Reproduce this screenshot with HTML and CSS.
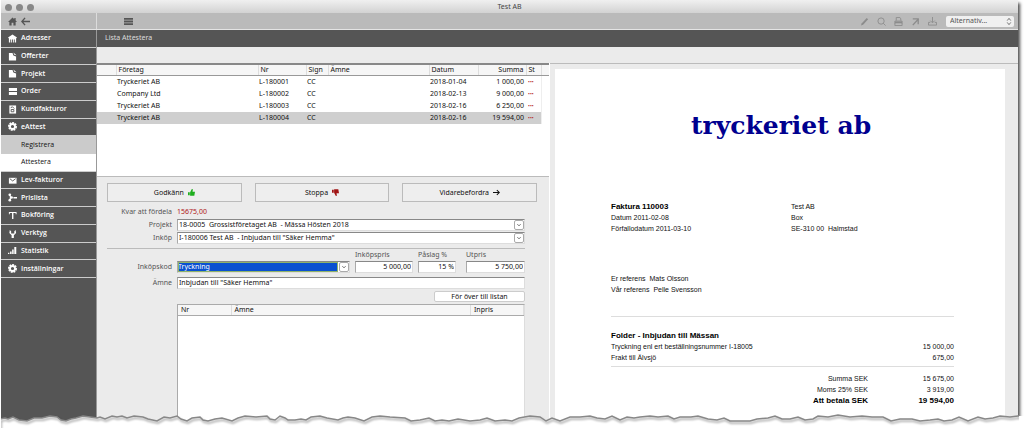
FILE: index.html
```
<!DOCTYPE html>
<html lang="sv">
<head>
    <meta charset="UTF-8">
    <meta name="viewport" content="width=device-width, initial-scale=1.0">
    <title>Test AB</title>
    <link rel="stylesheet" href="styles.css">
</head>
<body>
    <div class="window">
        <header class="titlebar">
            <span class="dots"><i></i><i></i><i></i></span>
            <h1>Test AB</h1>
        </header>

        <!-- Toolbar -->
        <div class="toolbar">
            <div class="toolbar-nav">
                <button type="button" aria-label="Hem"><svg viewBox="0 0 10 10"><path d="M5 0.5 0 5.5h1.5V9.5H4V6.500h2v3h2.500V5.500H10L8.500 4V1H7v1.500z"/></svg></button>
                <button type="button" aria-label="Tillbaka"><svg viewBox="0 0 10 10"><path d="M4.500 1 1 5l3.500 4M1 5h9" class="line"/></svg></button>
            </div>
            <button type="button" class="menu" aria-label="Meny"><svg viewBox="0 0 10 10"><path d="M0 1h10v2H0zM0 4h10v2H0zM0 7h10v2H0z"/></svg></button>
            <div class="toolbar-tools">
                <button type="button" aria-label="Redigera"><svg viewBox="0 0 10 10"><path d="M1 9.500 2 7l5.500-6L9 2.500 3.500 8.500z"/></svg></button>
                <button type="button" aria-label="Sök"><svg viewBox="0 0 10 10"><circle cx="4.500" cy="4.500" r="3.500" class="thin"/><path d="M7 7l2.500 2.500" class="thin"/></svg></button>
                <button type="button" aria-label="Skriv ut"><svg viewBox="0 0 10 10"><path d="M2.500 4V0.500h4L7.500 2v2M1 7.500V4.500h8v3M1 7v2.500h8V7" class="thin"/><path d="M1 5h8v2H1z"/></svg></button>
                <button type="button" aria-label="Öppna"><svg viewBox="0 0 10 10"><path d="M2 2h6v6M8.500 2 2 9" class="line"/></svg></button>
                <button type="button" aria-label="Hämta"><svg viewBox="0 0 10 10"><path d="M5 0v6M2.500 4 5 6.500 7.500 4M2.500 6H0.500v3h9V6h-2" class="thin"/></svg></button>
            </div>
            <div class="alt">
                <select aria-label="Alternativ"><option>Alternativ...</option></select>
                <svg viewBox="0 0 6 10"><path d="M1 4l2-2.500L5 4M1 6l2 2.500L5 6"/></svg>
            </div>
        </div>

        <div class="content">
            <nav class="sidebar">
                <div class="sidebar-items">
                    <a href="#"><svg viewBox="0 0 10 10"><path d="M5 0.500 0 4l1 1v4.500h1.500V6h1v3.500h1V6h1v3.500h1V6h1v3.500H9V5l1-1z"/></svg>Adresser</a>
                    <a href="#"><svg viewBox="0 0 10 10"><path d="M1 1h4l1 3 3 1v4.500H1zM6 0.500l3.500 3L7 3z"/></svg>Offerter</a>
                    <a href="#"><svg viewBox="0 0 10 10"><path d="M1 1h4l1 3 3 1v4.500H1zM6 0.500l3.500 3L7 3z"/></svg>Projekt</a>
                    <a href="#"><svg viewBox="0 0 10 10"><path d="M1 1h9v3.500H1zM1 5.500h9V9H1z"/></svg>Order</a>
                    <a href="#"><svg viewBox="0 0 10 10"><path d="M1.500 0.500h7.500v9H1.500z"/><path d="M3 3l2-1 2 2M3.500 5h3v2.500h-3z" class="cut"/></svg>Kundfakturor</a>
                    <a href="#"><svg viewBox="0 0 10 10"><circle cx="5" cy="5" r="4" class="teeth"/><circle cx="5" cy="5" r="2.800" class="ring"/></svg>eAttest</a>
                    <a href="#" class="sub">Registrera</a>
                    <a href="#" class="sub active">Attestera</a>
                    <a href="#"><svg viewBox="0 0 10 10"><path d="M1 2h8.500v6.500H1z"/><path d="M2 3l3.200 2.500L8.500 3" class="cut"/></svg>Lev-fakturor</a>
                    <a href="#"><svg viewBox="0 0 10 10"><circle cx="2" cy="2" r="1.500"/><circle cx="2" cy="8" r="1.500"/><circle cx="4" cy="5" r="1.500"/><path d="M2 2l2 3-2 3M6 4.500h4v1.500H6z"/></svg>Prislista</a>
                    <a href="#"><svg viewBox="0 0 10 10"><path d="M1 1h8.500v2.500h-1V2.300H6V9H4.500V2.300H2v1.200H1z"/></svg>Bokföring</a>
                    <a href="#"><svg viewBox="0 0 10 10"><path d="M2 1 1.500 4.500 4 7v3h2.500V7L9 4.500 8.500 1 7 2.500V5H3.500V2.500z"/></svg>Verktyg</a>
                    <a href="#"><svg viewBox="0 0 10 10"><path d="M0 7.500h1.500V9H0zM2.300 6h1.700v3H2.300zM4.600 4h1.700v5H4.600zM7 1h2.200v8H7z"/></svg>Statistik</a>
                    <a href="#"><svg viewBox="0 0 10 10"><circle cx="5" cy="5" r="4" class="teeth"/><circle cx="5" cy="5" r="2.800" class="ring"/></svg>Inställningar</a>
                </div>
            </nav>

            <div class="main">
                <h2 class="page-title">Lista Attestera</h2>

                <div class="panes">
                    <section class="left-pane">
                        <div class="list">
                            <table class="invoices">
                                <thead>
                                    <tr>
                                        <th class="c-mark"></th>
                                        <th class="c-company">Företag</th>
                                        <th class="c-nr">Nr</th>
                                        <th class="c-sign">Sign</th>
                                        <th>Ämne</th>
                                        <th class="c-date">Datum</th>
                                        <th class="c-sum">Summa</th>
                                        <th class="c-st">St</th>
                                        <th class="c-scroll"></th>
                                    </tr>
                                </thead>
                                <tbody>
                                    <tr><td></td><td>Tryckeriet AB</td><td>L-180001</td><td>CC</td><td></td><td>2018-01-04</td><td class="num">1 000,00</td><td class="st">•••</td><td></td></tr>
                                    <tr><td></td><td>Company Ltd</td><td>L-180002</td><td>CC</td><td></td><td>2018-02-13</td><td class="num">9 000,00</td><td class="st">•••</td><td></td></tr>
                                    <tr><td></td><td>Tryckeriet AB</td><td>L-180003</td><td>CC</td><td></td><td>2018-02-16</td><td class="num">6 250,00</td><td class="st">•••</td><td></td></tr>
                                    <tr class="selected"><td></td><td>Tryckeriet AB</td><td>L-180004</td><td>CC</td><td></td><td>2018-02-16</td><td class="num">19 594,00</td><td class="st">•••</td><td></td></tr>
                                </tbody>
                            </table>
                        </div>

                        <div class="actions">
                            <button type="button">Godkänn <svg class="ok" viewBox="0 0 10 10"><path d="M0 4.500h2.500V9H0zM3 4.500 5.500 0l1.500 0.500-0.500 3.500H10L9 9.500H3z"/></svg></button>
                            <button type="button">Stoppa <svg class="stop" viewBox="0 0 10 10"><path d="M0 1h2.500v4.500H0zM3 0.500h6l1 5.500H6.500l0.500 3.500-1.500 0.500L3 5.500z"/></svg></button>
                            <button type="button">Vidarebefordra <svg viewBox="0 0 10 10"><path d="M0 5h9M5.500 1.500 9 5 5.500 8.500" class="line"/></svg></button>
                        </div>

                        <form class="form">
                            <div class="field">
                                <span class="label">Kvar att fördela</span>
                                <output>15675,00</output>
                            </div>
                            <div class="field">
                                <label for="projekt">Projekt</label>
                                <div class="combo">
                                    <select id="projekt"><option>18-0005&nbsp; Grossistföretaget AB&nbsp; - Mässa Hösten 2018</option></select>
                                    <svg viewBox="0 0 10 10"><path d="M3 4l2 2 2-2"/></svg>
                                </div>
                            </div>
                            <div class="field">
                                <label for="inkop">Inköp</label>
                                <div class="combo">
                                    <select id="inkop"><option>I-180006 Test AB&nbsp; - Inbjudan till "Säker Hemma"</option></select>
                                    <svg viewBox="0 0 10 10"><path d="M3 4l2 2 2-2"/></svg>
                                </div>
                            </div>
                            <hr>
                            <div class="field code">
                                <label for="kod">Inköpskod</label>
                                <div class="combo marked">
                                    <select id="kod"><option>Tryckning</option></select>
                                    <svg viewBox="0 0 10 10"><path d="M3 4l2 2 2-2"/></svg>
                                </div>
                                <div class="price">
                                    <label for="inpris">Inköpspris</label>
                                    <input type="text" id="inpris" value="5 000,00">
                                </div>
                                <div class="price">
                                    <label for="paslag">Påslag %</label>
                                    <input type="text" id="paslag" value="15 %">
                                </div>
                                <div class="price last">
                                    <label for="utpris">Utpris</label>
                                    <input type="text" id="utpris" value="5 750,00">
                                </div>
                            </div>
                            <div class="field subject">
                                <label for="amne">Ämne</label>
                                <input type="text" id="amne" value='Inbjudan till "Säker Hemma"'>
                            </div>
                            <button type="button" class="add">För över till listan</button>
                            <div class="lines">
                                <table>
                                    <thead>
                                        <tr>
                                            <th class="l-nr">Nr</th>
                                            <th>Ämne</th>
                                            <th class="l-price">Inpris</th>
                                        </tr>
                                    </thead>
                                </table>
                            </div>
                        </form>
                    </section>

                    <!-- Invoice preview -->
                    <section class="preview">
                        <article class="paper">
                            <div class="brand">tryckeriet ab</div>
                            <div class="info">
                                <div>
                                    <h3>Faktura 110003</h3>
                                    <p>Datum 2011-02-08</p>
                                    <p>Förfallodatum 2011-03-10</p>
                                </div>
                                <address>Test AB<br>Box<br>SE-310 00&nbsp; Halmstad</address>
                            </div>
                            <div class="refs">
                                <p>Er referens&nbsp; Mats Olsson</p>
                                <p>Vår referens&nbsp; Pelle Svensson</p>
                            </div>
                            <table class="rows">
                                <tr><th colspan="2">Folder - Inbjudan till Mässan</th></tr>
                                <tr><td>Tryckning enl ert beställningsnummer I-18005</td><td class="num">15 000,00</td></tr>
                                <tr><td>Frakt till Älvsjö</td><td class="num">675,00</td></tr>
                            </table>
                            <table class="totals">
                                <tr><td>Summa SEK</td><td class="amount">15 675,00</td></tr>
                                <tr><td>Moms 25% SEK</td><td class="amount">3 919,00</td></tr>
                                <tr class="total"><td>Att betala SEK</td><td class="amount">19 594,00</td></tr>
                            </table>
                        </article>
                    </section>
                </div>
            </div>
        </div>
    </div>

    <!-- Torn paper edge -->
    <svg class="tear" viewBox="0 0 1024 24" preserveAspectRatio="none">
        <defs>
            <path id="edge" d="M0 24V12L5 11 8 12 13 10 19 13 27 14 34 11 42 11 50 9 57 10 61 13 66 14 71 12 76 11 83 9 90 10 97 11 100 10 105 12 112 9 117 10 122 9 127 11 134 9 143 10 148 12 157 14 164 10 170 11 177 9 181 12 187 14 192 11 200 10 203 13 208 14 215 12 222 11 232 14 238 11 245 9 256 10 267 9 270 12 275 13 280 9 285 11 288 13 295 13 301 12 306 13 311 10 320 9 327 11 338 13 343 11 348 10 355 11 364 14 372 10 380 9 390 10 405 11 411 14 420 13 429 11 435 14 442 13 449 14 458 12 470 14 480 13 487 11 495 14 505 13 512 14 519 11 530 9 540 10 546 14 552 11 560 14 570 10 580 10 590 9 597 11 605 12 612 9 620 13 627 10 634 11 640 10 650 9 658 10 668 9 674 12 680 10 691 10 698 9 708 12 717 13 724 11 730 14 740 14 750 14 757 12 768 11 775 9 782 12 790 12 798 10 805 13 813 12 818 9 828 10 838 8 850 10 862 9 872 10 883 10 891 14 900 12 912 12 920 14 930 13 938 12 944 14 952 13 959 10 968 14 978 10 985 12 993 11 1000 9 1010 10 1018 9H1024V24z"/>
            <clipPath id="page"><rect x="1" y="0" width="1018" height="21"/></clipPath>
        </defs>
        <use href="#edge" class="tear-fill"/>
        <g clip-path="url(#page)"><use href="#edge" class="tear-line"/></g>
    </svg>
</body>
</html>
```
FILE: styles.css
```
* {
    box-sizing: border-box;
}

body {
    display: flex;
    position: relative;
    min-height: 100vh;
    margin: 0;
    padding: 0 6px 0 1px;
    background: #fff;
    color: #111;
    font-family: "Noto Sans", "Open Sans", sans-serif;
    font-size: 7px;
    line-height: 10px;
    overflow: hidden;
}

h1, h2, h3, p {
    margin: 0;
    font-size: inherit;
    font-weight: normal;
}

a {
    color: inherit;
    text-decoration: none;
}

button, select, input {
    margin: 0;
    padding: 0;
    border: none;
    border-radius: 0;
    background: none;
    color: inherit;
    font: inherit;
    appearance: none;
}

svg {
    display: block;
    flex: none;
    width: 9px;
    height: 9px;
    fill: currentColor;
}

.line, .thin {
    fill: none;
    stroke: currentColor;
    stroke-width: 1.5;
}

.thin {
    stroke-width: 1;
}

table {
    width: 100%;
    border-collapse: collapse;
    table-layout: fixed;
}

th, td {
    padding: 0;
    font-weight: normal;
    text-align: left;
    white-space: nowrap;
}

.num {
    text-align: right;
}

.window {
    display: flex;
    flex-direction: column;
    flex: 1;
    min-width: 0;
    background: #ebebeb;
    box-shadow: 3px 2px 3px -1px rgba(0, 0, 0, 0.7);
}

/* Title bar and toolbar */
.titlebar {
    display: grid;
    grid-template-columns: 1fr auto 1fr;
    align-items: center;
    height: 13px;
    padding: 1px 4px 0;
    background: linear-gradient(#f0f0f0, #d2d2d2);
    color: #444;
}

.dots {
    display: flex;
    gap: 4px;
}

.dots i {
    width: 7px;
    height: 7px;
    border-radius: 50%;
    background: #888;
}

.toolbar {
    display: flex;
    align-items: center;
    height: 17px;
    padding-right: 4px;
    border-bottom: 1px solid #e4e4e4;
    background: #bababa;
    color: #555;
}

.toolbar-nav {
    display: flex;
    align-items: center;
    align-self: stretch;
    gap: 4px;
    width: 96px;
    padding-left: 7px;
    border-right: 1px solid #dcdcdc;
}

.menu {
    margin-left: 27px;
}

.toolbar-tools {
    display: flex;
    gap: 8px;
    margin-left: auto;
    margin-right: 9px;
    color: #8c8c8c;
}

.alt {
    display: flex;
    align-items: center;
    width: 68px;
    height: 11px;
    padding: 0 2px 0 4px;
    border-radius: 2px;
    background: #f0f0f0;
}

.alt select {
    flex: 1;
    min-width: 0;
}

.alt svg {
    width: 6px;
    fill: none;
    stroke: #666;
}

.content {
    display: grid;
    grid-template-columns: 96px minmax(0, 1fr);
    flex: 1;
}

/* Sidebar */
.sidebar {
    border-right: 1px solid #999;
    background: #555;
}

.sidebar-items {
    display: grid;
    grid-template-rows: repeat(14, 1fr);
    height: 248px;
}

.sidebar a {
    display: flex;
    align-items: center;
    gap: 4px;
    padding-left: 7px;
    border-bottom: 1px solid #ccc;
    color: #fff;
    font-family: "Open Sans", sans-serif;
    font-weight: 600;
}

.sidebar .sub {
    padding-left: 20px;
    background: #cbcbcb;
    color: #111;
    font-weight: normal;
}

.sidebar .active {
    background: #fff;
}

.cut {
    fill: none;
    stroke: #555;
}

.teeth {
    fill: none;
    stroke: #fff;
    stroke-width: 2;
    stroke-dasharray: 2 1;
}

.ring {
    fill: none;
    stroke: #fff;
    stroke-width: 2;
}

.main {
    display: flex;
    flex-direction: column;
}

.page-title {
    height: 17px;
    padding-left: 8px;
    background: #555;
    color: #ddd;
    line-height: 16px;
}

.panes {
    display: grid;
    grid-template-columns: minmax(0, 453fr) minmax(0, 468fr);
    flex: 1;
    padding-top: 16px;
}

.left-pane {
    display: flex;
    flex-direction: column;
    border-right: 1px solid #fff;
}

/* Invoice list */
.list {
    height: 114px;
    border-top: 2px solid #888;
    border-bottom: 1px solid #bbb;
    background: #fff;
}

.invoices th {
    height: 10px;
    padding-left: 2px;
    border-bottom: 1px solid #999;
    border-left: 1px solid #ddd;
    background: #f6f6f6;
}

.invoices td {
    height: 12px;
    padding-left: 1px;
}

.invoices .c-mark { width: 19px; border-left: none; }
.invoices .c-company { width: 142px; }
.invoices .c-nr { width: 48px; }
.invoices .c-sign { width: 22px; }
.invoices .c-date { width: 49px; }
.invoices .c-sum { width: 48px; padding-right: 2px; text-align: right; }
.invoices .c-st { width: 15px; }
.invoices .c-scroll { width: 8px; }

.invoices .num {
    padding-right: 2px;
}

.invoices .st {
    padding-left: 2px;
    color: #b01818;
    font-size: 5px;
}

.invoices .selected td:not(:last-child) {
    background: #cfcfcf;
}

.invoices td:last-child {
    border-left: 1px solid #eee;
}

/* Action buttons */
.actions {
    display: flex;
    gap: 13px;
    padding: 6px 12px 3px 10px;
}

.actions button {
    display: flex;
    align-items: center;
    justify-content: center;
    flex: 1;
    gap: 4px;
    height: 19px;
    border: 1px solid #bbb;
    background: #eee;
}

.actions svg {
    width: 7px;
    height: 7px;
}

.actions .ok {
    color: #1fae1f;
}

.actions .stop {
    color: #a01414;
}

/* Form */
.form {
    display: flex;
    flex-direction: column;
    flex: 1;
    padding: 0 24px 0 10px;
}

.field {
    display: grid;
    grid-template-columns: 65px minmax(0, 1fr);
    column-gap: 5px;
    align-items: center;
    height: 13px;
}

.field label, .label {
    color: #555;
    text-align: right;
    white-space: nowrap;
}

output {
    color: #b01818;
}

input {
    width: 100%;
    min-width: 0;
    height: 12px;
    padding: 0 1px;
    border: 1px solid #ddd;
    border-top-color: #888;
    border-left-color: #aaa;
    background: #fff;
}

.combo {
    display: flex;
    align-items: center;
    height: 12px;
    border: 1px solid #ddd;
    border-top-color: #888;
    border-left-color: #aaa;
    background: #fff;
}

.combo select {
    flex: 1;
    min-width: 0;
    height: 10px;
    padding-left: 1px;
}

.combo svg {
    width: 10px;
    height: 10px;
    border: 1px solid #aaa;
    border-radius: 2px;
    fill: none;
    stroke: #444;
}

.combo.marked select {
    margin-right: 1px;
    padding-left: 0;
    outline: 1px solid #8fb36a;
    outline-offset: -1px;
    background: #0a50d0;
    color: #fff;
}

hr {
    width: 100%;
    height: 1px;
    margin: 4px 0 11px;
    border: none;
    background: #bbb;
}

.code {
    grid-template-columns: 65px minmax(0, 1fr) 58px 38px 64px;
}

.price {
    position: relative;
}

.price label {
    position: absolute;
    bottom: 13px;
    left: 0;
}

.price input {
    text-align: right;
}

.price.last {
    padding-left: 5px;
}

.price.last label {
    left: 5px;
}

.subject {
    margin-top: 3px;
}

.add {
    align-self: flex-end;
    width: 91px;
    height: 11px;
    margin: 2px 0;
    border: 1px solid #ccc;
    border-radius: 2px;
    background: #fff;
}

.lines {
    flex: 1;
    margin-left: 70px;
    border: 1px solid #aaa;
    border-right-color: #ddd;
    background: #fff;
}

.lines th {
    height: 10px;
    padding-left: 3px;
    border-bottom: 1px solid #aaa;
    border-right: 1px solid #ddd;
    background: #f6f6f6;
}

.lines .l-nr { width: 53px; }
.lines .l-price { width: 53px; }

/* Invoice preview */
.preview {
    display: flex;
    padding: 5px 13px 0 5px;
    border-top: 1px solid #bbb;
}

.paper {
    flex: 1;
    padding: 41px 51px 0 56px;
    background: #fff;
    font-family: "Liberation Sans", Arial, sans-serif;
    line-height: 11px;
}

.brand {
    margin: 0 0 60px 80px;
    padding-top: 1px;
    color: #00008f;
    font-family: "DejaVu Serif", serif;
    font-size: 25px;
    font-weight: bold;
    line-height: 30px;
    white-space: nowrap;
}

.info {
    display: grid;
    grid-template-columns: 180px 1fr;
    margin-bottom: 39px;
}

.info h3, .rows th, .total td {
    color: #000;
    font-size: 8px;
    font-weight: bold;
}

address {
    font-style: normal;
}

.refs {
    margin-bottom: 21px;
}

.rows {
    border-top: 1px solid #ddd;
    border-bottom: 1px solid #ddd;
    border-collapse: separate;
    border-spacing: 0;
    padding: 13px 0 3px;
}

.rows td, .rows th, .totals td {
    height: 11px;
}

.rows .num {
    width: 60px;
}

.totals {
    margin-top: 6px;
}

.totals td {
    text-align: right;
}

.totals .amount {
    width: 86px;
}

/* Torn edge */
.tear {
    position: absolute;
    bottom: 0;
    left: 0;
    width: 100%;
    height: 24px;
}

.tear-fill {
    fill: #fff;
}

.tear-line {
    fill: none;
    stroke: #888;
    stroke-width: 1.5;
    filter: drop-shadow(1px 2px 1px rgba(0, 0, 0, 0.4));
}
```
